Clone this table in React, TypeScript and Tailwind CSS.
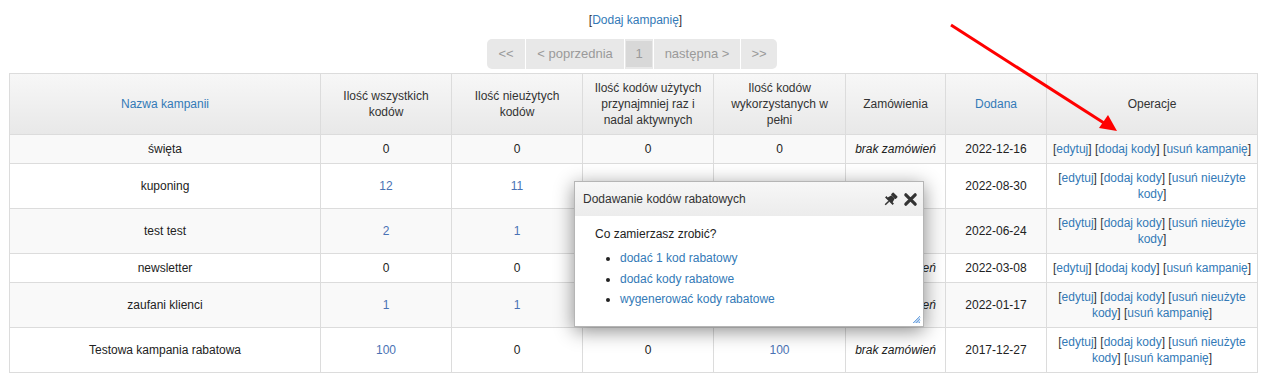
import { Fragment } from 'react'

type Op = 'edytuj' | 'dodaj kody' | 'usuń kampanię' | 'usuń nieużyte kody'

type Row = {
  name: string
  all: string
  allLink?: boolean
  unused: string
  unusedLink?: boolean
  active: string
  activeLink?: boolean
  used: string
  usedLink?: boolean
  orders: string
  date: string
  ops: Op[]
  tall?: boolean
}

const rows: Row[] = [
  { name: 'święta', all: '0', unused: '0', active: '0', used: '0', orders: 'brak zamówień', date: '2022-12-16', ops: ['edytuj', 'dodaj kody', 'usuń kampanię'] },
  { name: 'kuponing', all: '12', allLink: true, unused: '11', unusedLink: true, active: '0', used: '1', usedLink: true, orders: '', date: '2022-08-30', ops: ['edytuj', 'dodaj kody', 'usuń nieużyte kody'], tall: true },
  { name: 'test test', all: '2', allLink: true, unused: '1', unusedLink: true, active: '0', used: '1', usedLink: true, orders: '', date: '2022-06-24', ops: ['edytuj', 'dodaj kody', 'usuń nieużyte kody'], tall: true },
  { name: 'newsletter', all: '0', unused: '0', active: '0', used: '0', orders: 'brak zamówień', date: '2022-03-08', ops: ['edytuj', 'dodaj kody', 'usuń kampanię'] },
  { name: 'zaufani klienci', all: '1', allLink: true, unused: '1', unusedLink: true, active: '0', used: '0', orders: 'brak zamówień', date: '2022-01-17', ops: ['edytuj', 'dodaj kody', 'usuń nieużyte kody', 'usuń kampanię'], tall: true },
  { name: 'Testowa kampania rabatowa', all: '100', allLink: true, unused: '0', active: '0', used: '100', usedLink: true, orders: 'brak zamówień', date: '2017-12-27', ops: ['edytuj', 'dodaj kody', 'usuń nieużyte kody', 'usuń kampanię'], tall: true },
]

function Num({ value, link }: { value: string; link?: boolean }) {
  return link ? <a className="text-[#4a72b4]">{value}</a> : <span>{value}</span>
}

function Pager() {
  const cell = 'flex items-center justify-center h-full'
  return (
    <div className="flex justify-center pr-[7px]">
      <div className="flex h-[30px] items-stretch rounded-[5px] bg-[#e8e8e8] text-[13px] text-[#9a9a9a]">
        <span className={`${cell} w-[38px]`}>&lt;&lt;</span>
        <span className={`${cell} w-[99px] border-l border-white`}>&lt; poprzednia</span>
        <span className={`${cell} w-[29px] border-l border-white`}>
          <span className="flex h-[26px] w-[26px] items-center justify-center bg-[#d8d8d8]">1</span>
        </span>
        <span className={`${cell} w-[87px] border-l border-white`}>następna &gt;</span>
        <span className={`${cell} w-[37px] border-l border-white`}>&gt;&gt;</span>
      </div>
    </div>
  )
}

function Dialog() {
  return (
    <div className="absolute left-[574px] top-[181px] w-[350px] h-[146px] border border-[#b5b5b5] bg-white shadow-[0_4px_18px_rgba(0,0,0,0.45)]">
      <div className="flex h-[34px] items-center justify-between bg-gradient-to-b from-[#f7f7f7] to-[#ececec] pl-[8px] pr-[5px] text-[12px] text-[#333]">
        <span>Dodawanie kodów rabatowych</span>
        <div className="flex items-center gap-[5px]">
          <svg width="15" height="15" viewBox="0 0 16 16">
            <g transform="rotate(45 8 8)" fill="#333">
              <rect x="4.5" y="0.5" width="7" height="3.5" rx="0.8" />
              <path d="M5.5 4 h5 l1.2 4.5 h2 v2 h-11.4 v-2 h2 z" />
              <rect x="7.2" y="10.5" width="1.6" height="5.5" />
            </g>
          </svg>
          <svg width="15" height="15" viewBox="0 0 16 16">
            <path d="M3 3 L13 13 M13 3 L3 13" stroke="#333" strokeWidth="3.4" strokeLinecap="round" />
          </svg>
        </div>
      </div>
      <div className="px-[20px] pt-[10px] text-[12px] text-[#222]">
        <p className="leading-[16px]">Co zamierzasz zrobić?</p>
        <ul className="mt-[6px] list-disc pl-[25px] leading-[20.5px] marker:text-[#222]">
          <li><a className="text-[#337ab7]">dodać 1 kod rabatowy</a></li>
          <li><a className="text-[#337ab7]">dodać kody rabatowe</a></li>
          <li><a className="text-[#337ab7]">wygenerować kody rabatowe</a></li>
        </ul>
      </div>
      <svg className="absolute right-[2px] bottom-[2px]" width="9" height="9" viewBox="0 0 9 9">
        <path d="M8 1 L1 8 M8 4 L4 8 M8 7 L7 8 M8 2.5 L2.5 8 M8 5.5 L5.5 8" stroke="#4f8fd8" strokeWidth="0.8" />
      </svg>
    </div>
  )
}

export default function App() {
  const th = 'border border-[#dcdcdc] px-[8px] font-normal leading-[16px] text-[#333]'
  const td = 'border border-[#dcdcdc] px-[5px] text-center leading-[16px]'
  return (
    <div className="relative h-[378px] w-[1271px] overflow-hidden bg-white font-['Liberation_Sans',Arial,sans-serif] text-[12px] text-[#222]">
      <p className="pt-[12px] text-center leading-[16px] text-[#333]">
        [<a className="text-[#337ab7]">Dodaj kampanię</a>]
      </p>
      <div className="mt-[11px]">
        <Pager />
      </div>
      <table className="ml-[9px] mt-[4px] w-[1248px] table-fixed border-collapse">
        <colgroup>
          <col className="w-[311px]" />
          <col className="w-[131px]" />
          <col className="w-[131px]" />
          <col className="w-[131px]" />
          <col className="w-[132px]" />
          <col className="w-[100px]" />
          <col className="w-[101px]" />
          <col className="w-[211px]" />
        </colgroup>
        <thead>
          <tr className="h-[61px] bg-gradient-to-b from-[#f7f7f7] to-[#e8e8e8]">
            <th className={th}><a className="text-[#337ab7]">Nazwa kampanii</a></th>
            <th className={th}>Ilość wszystkich kodów</th>
            <th className={th}>Ilość nieużytych kodów</th>
            <th className={th}>Ilość kodów użytych przynajmniej raz i nadal aktywnych</th>
            <th className={th}>Ilość kodów wykorzystanych w pełni</th>
            <th className={th}>Zamówienia</th>
            <th className={th}><a className="text-[#337ab7]">Dodana</a></th>
            <th className={th}>Operacje</th>
          </tr>
        </thead>
        <tbody>
          {rows.map((r, i) => (
            <tr key={r.name} className={`${r.tall ? 'h-[45px]' : 'h-[29px]'} ${i % 2 === 0 ? 'bg-[#f9f9f9]' : 'bg-white'}`}>
              <td className={td}>{r.name}</td>
              <td className={td}><Num value={r.all} link={r.allLink} /></td>
              <td className={td}><Num value={r.unused} link={r.unusedLink} /></td>
              <td className={td}><Num value={r.active} link={r.activeLink} /></td>
              <td className={td}><Num value={r.used} link={r.usedLink} /></td>
              <td className={`${td} italic`}>{r.orders}</td>
              <td className={td}>{r.date}</td>
              <td className={td}>
                {r.ops.map((op, j) => (
                  <Fragment key={op}>
                    {j > 0 && ' '}
                    <span className="text-[#333]">[</span>
                    <a className="text-[#337ab7]">{op}</a>
                    <span className="text-[#333]">]</span>
                  </Fragment>
                ))}
              </td>
            </tr>
          ))}
        </tbody>
      </table>
      <Dialog />
      <svg className="pointer-events-none absolute left-0 top-0" width="1271" height="378">
        <line x1="951" y1="25" x2="1104" y2="123" stroke="#ff0000" strokeWidth="3" />
        <polygon points="1117,131 1099,128 1108,115" fill="#ff0000" />
      </svg>
    </div>
  )
}
